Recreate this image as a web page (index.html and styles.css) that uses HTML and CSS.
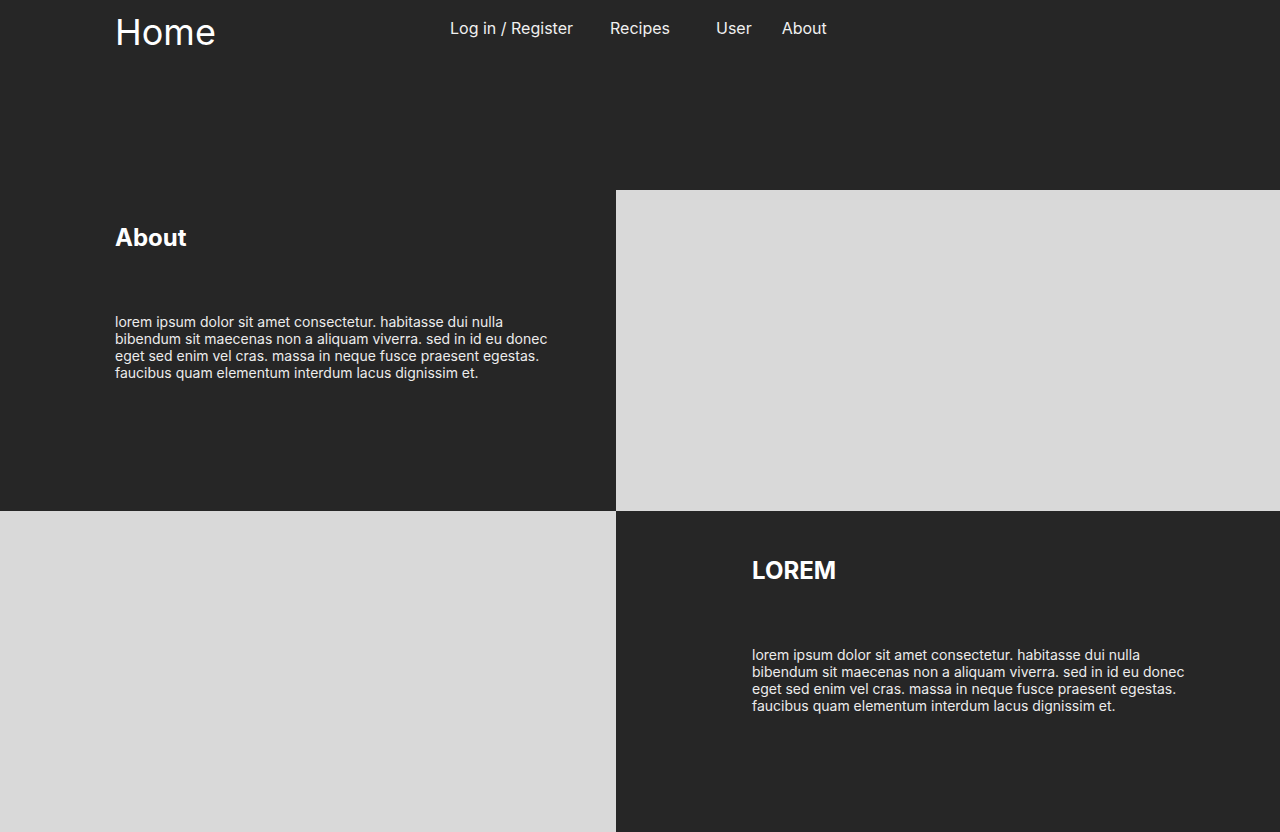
FILE: index.html
```html
<!DOCTYPE html>
<html lang="en">
<head>
<meta charset="utf-8">
<title>Home</title>
<link rel="stylesheet" href="styles.css">
</head>
<body>
<header class="header">
  <h1 class="brand">Home</h1>
  <nav class="nav">
    <a class="nav-link nav-login" href="#">Log in / Register</a>
    <a class="nav-link nav-recipes" href="#">Recipes</a>
    <a class="nav-link nav-user" href="#">User</a>
    <a class="nav-link" href="#">About</a>
  </nav>
</header>
<section class="row">
  <div class="text-block text-left">
    <h2 class="heading">About</h2>
    <p class="body">lorem ipsum dolor sit amet consectetur. habitasse dui nulla bibendum sit maecenas non a aliquam viverra. sed in id eu donec eget sed enim vel cras. massa in neque fusce praesent egestas. faucibus quam elementum interdum lacus dignissim et.</p>
  </div>
  <div class="image-block"></div>
</section>
<section class="row">
  <div class="image-block"></div>
  <div class="text-block text-right">
    <h2 class="heading">LOREM</h2>
    <p class="body">lorem ipsum dolor sit amet consectetur. habitasse dui nulla bibendum sit maecenas non a aliquam viverra. sed in id eu donec eget sed enim vel cras. massa in neque fusce praesent egestas. faucibus quam elementum interdum lacus dignissim et.</p>
  </div>
</section>
</body>
</html>
```
FILE: styles.css
```css
* { box-sizing: border-box; }
html, body {
  margin: 0;
  padding: 0;
  background: #262626;
  color: #ffffff;
  font-family: Inter, "Noto Sans", sans-serif;
}
.header {
  height: 190px;
  display: flex;
  align-items: flex-start;
  padding-left: 115px;
}
.brand {
  margin: 0;
  padding-top: 10px;
  font-size: 36px;
  font-weight: 400;
  line-height: 44px;
  width: 335px;
}
.nav {
  display: flex;
  padding-top: 18px;
}
.nav-link {
  color: #f0f0f0;
  text-decoration: none;
  font-size: 16px;
  line-height: 20px;
}
.nav-login { margin-right: 37px; }
.nav-recipes { margin-right: 46px; }
.nav-user { margin-right: 30px; }
.row {
  display: grid;
  grid-template-columns: 616px 1fr;
  height: 321px;
}
.image-block { background: #d9d9d9; }
.text-block { padding-top: 33px; }
.text-left { padding-left: 115px; padding-right: 60px; }
.text-right { padding-left: 136px; padding-right: 90px; padding-top: 45px; }
.heading {
  margin: 0;
  font-size: 24px;
  font-weight: 700;
  line-height: 29px;
}
.body {
  margin: 61px 0 0;
  width: 440px;
  font-size: 14px;
  line-height: 17px;
  color: #ececec;
}
```
